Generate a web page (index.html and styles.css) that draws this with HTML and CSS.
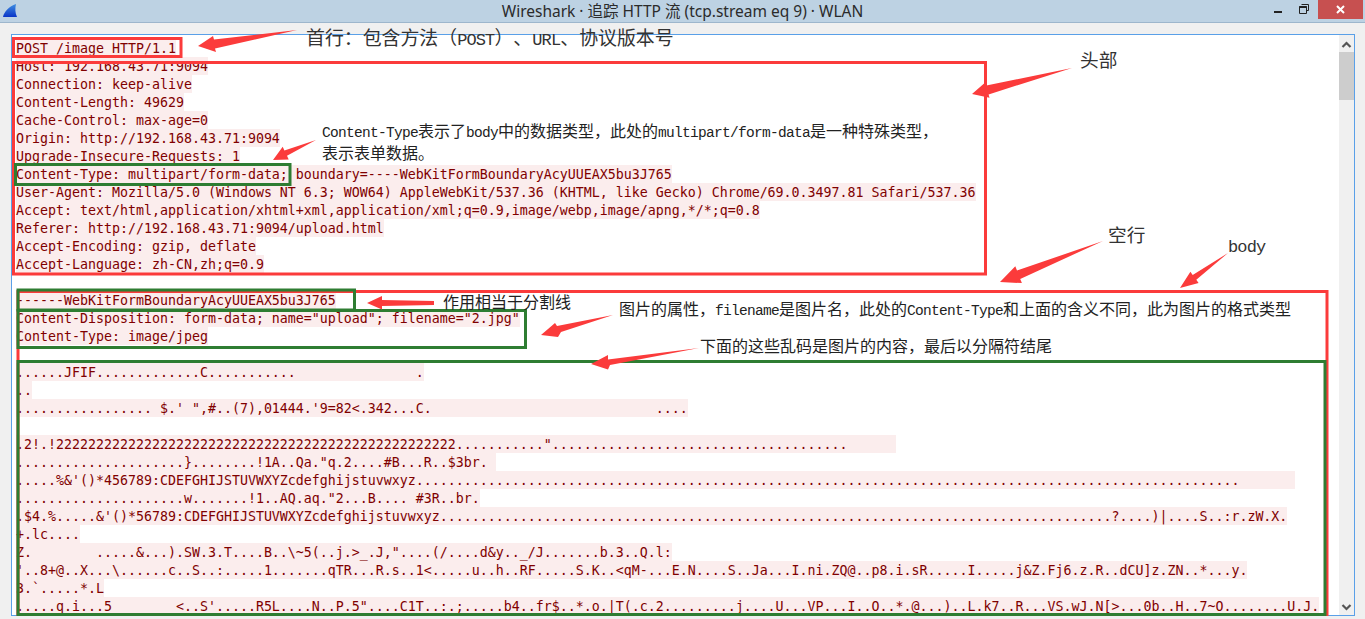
FILE: index.html
```html
<!DOCTYPE html>
<html lang="zh-CN">
<head>
<meta charset="utf-8">
<title>Wireshark · 追踪 HTTP 流 (tcp.stream eq 9) · WLAN</title>
<link rel="stylesheet" href="styles.css">
</head>
<body>
<div class="window">
  <header class="titlebar">
    <svg class="fin" width="16" height="16" viewBox="0 0 16 16"><defs><linearGradient id="fing" x1="0" y1="0" x2="0" y2="1"><stop offset="0" stop-color="#3f8ee0"/><stop offset="1" stop-color="#0a35c8"/></linearGradient></defs><path d="M1 14 C2 9 7 3 14 1 C13 5 13 10 15 14 Z" fill="url(#fing)"/></svg>
    <div class="title">Wireshark · 追踪 HTTP 流 (tcp.stream eq 9) · WLAN</div>
    <div class="controls">
      <svg class="ctl-min" width="8" height="2" viewBox="0 0 8 2"><rect width="8" height="2" fill="#222"/></svg>
      <svg class="ctl-max" width="10" height="10" viewBox="0 0 10 10"><path d="M2.500 .5H9.500V6.500H7.500M.5 2.500H7.500V9.500H.5Z" fill="none" stroke="#222"/><rect x=".5" y="2" width="7" height="2" fill="#222"/></svg>
      <div class="ctl-close"><svg width="9" height="9" viewBox="0 0 9 9"><path d="M1 1L8 8M8 1L1 8" stroke="#fff" stroke-width="2"/></svg></div>
    </div>
  </header>
  <main class="content">
    <div class="frame">
      <div class="stream">
<div class="ln"><span class="hl">POST /image HTTP/1.1</span></div>
<div class="ln"><span class="hl">Host: 192.168.43.71:9094</span></div>
<div class="ln"><span class="hl">Connection: keep-alive</span></div>
<div class="ln"><span class="hl">Content-Length: 49629</span></div>
<div class="ln"><span class="hl">Cache-Control: max-age=0</span></div>
<div class="ln"><span class="hl">Origin: http://192.168.43.71:9094</span></div>
<div class="ln"><span class="hl">Upgrade-Insecure-Requests: 1</span></div>
<div class="ln"><span class="hl">Content-Type: multipart/form-data; boundary=----WebKitFormBoundaryAcyUUEAX5bu3J765</span></div>
<div class="ln"><span class="hl">User-Agent: Mozilla/5.0 (Windows NT 6.3; WOW64) AppleWebKit/537.36 (KHTML, like Gecko) Chrome/69.0.3497.81 Safari/537.36</span></div>
<div class="ln"><span class="hl">Accept: text/html,application/xhtml+xml,application/xml;q=0.9,image/webp,image/apng,*/*;q=0.8</span></div>
<div class="ln"><span class="hl">Referer: http://192.168.43.71:9094/upload.html</span></div>
<div class="ln"><span class="hl">Accept-Encoding: gzip, deflate</span></div>
<div class="ln"><span class="hl">Accept-Language: zh-CN,zh;q=0.9</span></div>
<div class="ln"></div>
<div class="ln"><span class="hl">------WebKitFormBoundaryAcyUUEAX5bu3J765</span></div>
<div class="ln"><span class="hl">Content-Disposition: form-data; name="upload"; filename="2.jpg"</span></div>
<div class="ln"><span class="hl">Content-Type: image/jpeg</span></div>
<div class="ln"></div>
<div class="ln"><span class="hl">......JFIF.............C...........               .</span></div>
<div class="ln"><span class="hl">..</span></div>
<div class="ln"><span class="hl">................. $.' ",#..(7),01444.'9=82&lt;.342...C.                            ....</span></div>
<div class="ln"></div>
<div class="ln"><span class="hl">.2!.!22222222222222222222222222222222222222222222222222...........".....................................      </span></div>
<div class="ln"><span class="hl">.....................}........!1A..Qa."q.2....#B...R..$3br. </span></div>
<div class="ln"><span class="hl">.....%&amp;'()*456789:CDEFGHIJSTUVWXYZcdefghijstuvwxyz.......................................................................................................       </span></div>
<div class="ln"><span class="hl">.....................w.......!1..AQ.aq."2...B.... #3R..br.</span></div>
<div class="ln"><span class="hl">.$4.%.....&amp;'()*56789:CDEFGHIJSTUVWXYZcdefghijstuvwxyz....................................................................................?....)|....S..:r.zW.X.</span></div>
<div class="ln"><span class="hl">+.lc....</span></div>
<div class="ln"><span class="hl">Z.        .....&amp;...).SW.3.T....B..\~5(..j.&gt;_.J,"....(/....d&amp;y.._/J.......b.3..Q.l:</span></div>
<div class="ln"><span class="hl">'..8+@..X...\......c..S..:.....1.......qTR...R.s..1&lt;.....u..h..RF.....S.K..&lt;qM-...E.N....S..Ja...I.ni.ZQ@..p8.i.sR.....I.....j&amp;Z.Fj6.z.R..dCU]z.ZN..*...y.</span></div>
<div class="ln"><span class="hl">3.`.....*.L</span></div>
<div class="ln"><span class="hl">.....q.i...5        &lt;..S'.....R5L....N..P.5"....C1T..:.;.....b4..fr$..*.o.|T(.c.2.........j....U...VP...I..O..*.@...)..L.k7..R...VS.wJ.N[&gt;...0b..H..7~O........U.J.</span></div>
      </div>
      <div class="scrollbar">
        <svg class="chev" width="11" height="7" viewBox="0 0 11 7"><path d="M1.500 6L5.500 2L9.500 6" fill="none" stroke="#555" stroke-width="2.200"/></svg>
        <div class="thumb"></div>
        <div class="track"></div>
        <svg class="chev" width="11" height="7" viewBox="0 0 11 7"><path d="M1.500 1L5.500 5L9.500 1" fill="none" stroke="#555" stroke-width="2.200"/></svg>
      </div>
    </div>
  </main>
  <svg class="marks" width="1365" height="619" viewBox="0 0 1365 619">
    <g class="red-box">
      <rect x="13.500" y="38.500" width="167.500" height="18"/>
      <rect x="13.500" y="62.500" width="972" height="211.500"/>
      <rect x="18" y="291.500" width="1309" height="323"/>
    </g>
    <g class="green-box">
      <rect x="15.500" y="164.500" width="274.500" height="20"/>
      <rect x="18" y="290" width="336.500" height="20"/>
      <rect x="18" y="310.500" width="507.500" height="37"/>
      <rect x="18" y="361.500" width="1307" height="253"/>
    </g>
    <g class="arrows">
      <polygon points="297,30 215,48.500 216,52 198,46 213,36 214,39.500"/>
      <polygon points="1072,68 988.600,94.400 989.500,97.700 972,94 985.500,82.300 986.400,85.600"/>
      <polygon points="316,140 287,155.800 288.700,159.400 273,160 282.700,146.800 284.400,150.400"/>
      <polygon points="1103,241 1020.200,278.900 1021.900,283.100 1000,282 1015.300,266.300 1017,270.500"/>
      <polygon points="1228,253 1196.300,279.800 1198.600,283 1180,288 1190.400,271.700 1192.700,275"/>
      <polygon points="434,301 434,305 382,306 382,309.500 367,303 382,296 382,300"/>
      <polygon points="613,315 561,332 558,337 541,335 555,323 557,326"/>
      <polygon points="699,348 610,365 608,369.500 591,364 608,355 608,359.500"/>
    </g>
  </svg>
  <div class="note n-first big">首行：包含方法（<span class="lat-big">POST</span>）、<span class="lat-big">URL</span>、协议版本号</div>
  <div class="note n-head big">头部</div>
  <div class="note n-blank big">空行</div>
  <div class="note n-body big"><span class="lat-big">body</span></div>
  <div class="note n-type"><span class="lat">Content-Type</span>表示了<span class="lat">body</span>中的数据类型，此处的<span class="lat">multipart/form-data</span>是一种特殊类型，<br>表示表单数据。</div>
  <div class="note n-split">作用相当于分割线</div>
  <div class="note n-attr">图片的属性，<span class="lat">filename</span>是图片名，此处的<span class="lat">Content-Type</span>和上面的含义不同，此为图片的格式类型</div>
  <div class="note n-data">下面的这些乱码是图片的内容，最后以分隔符结尾</div>
</div>
</body>
</html>
```
FILE: styles.css
```css
* { box-sizing: border-box; }
html, body { margin: 0; padding: 0; overflow: hidden; }
.window {
  position: relative;
  width: 1365px;
  height: 619px;
  display: flex;
  flex-direction: column;
  background: #f0f0f0;
}
.titlebar {
  position: relative;
  flex: none;
  height: 23px;
  display: flex;
  align-items: center;
  justify-content: center;
  background: #bdd2e3;
  border-bottom: 1px solid #9db6cc;
}
.fin { position: absolute; left: 2px; top: 3px; }
.title {
  font: 15.500px/22px "Noto Sans", "Noto Sans CJK SC", sans-serif;
  color: #2b2b2b;
  white-space: nowrap;
}
.controls {
  position: absolute;
  right: 2px;
  top: 0;
  display: flex;
  align-items: flex-start;
}
.ctl-min { margin: 11px 17px 0 0; }
.ctl-max { margin: 4px 9px 0 0; }
.ctl-close {
  width: 45px;
  height: 19px;
  background: #c75050;
  display: flex;
  align-items: center;
  justify-content: center;
}
.content {
  flex: 1;
  min-height: 0;
  padding: 11px 10px 3px 11px;
}
.frame {
  height: 100%;
  display: flex;
  background: #fff;
  border: 1px solid #5aa0e8;
}
.stream {
  flex: 1;
  min-width: 0;
  padding: 4px 0 0 4px;
  overflow: hidden;
  font: 13.29px/20px "DejaVu Sans Mono", monospace;
  color: #800000;
}
.ln { height: 18px; white-space: pre; }
.hl { display: inline-block; height: 18px; background: #fbeded; vertical-align: top; }
.scrollbar {
  flex: none;
  width: 15px;
  display: flex;
  flex-direction: column;
  align-items: center;
  background: #f0f0f0;
}
.chev { flex: none; margin: 6px 0 4px; }
.thumb { flex: none; width: 100%; height: 48px; background: #cdcdcd; }
.track { flex: 1; }
.marks { position: absolute; left: 0; top: 0; pointer-events: none; }
.red-box rect { fill: none; stroke: #fb3b3b; stroke-width: 3; }
.green-box rect { fill: none; stroke: #2e7d32; stroke-width: 3; }
.arrows polygon { fill: #fb3b3b; }
.note {
  position: absolute;
  font: 16px/19px "Noto Sans CJK SC", sans-serif;
  color: #222;
  white-space: nowrap;
  text-spacing-trim: space-all;
}
.big { font-size: 18.67px; line-height: 22px; color: #333; }
.lat { font: 14.500px/19px "Liberation Mono", monospace; letter-spacing: -.7px; }
.lat-big { font: 17px/22px "Liberation Mono", monospace; letter-spacing: -.87px; }
.n-first { left: 306px; top: 26px; font-size: 18.9px; }
.n-head { left: 1080px; top: 48px; }
.n-blank { left: 1108px; top: 223px; }
.n-body { left: 1228px; top: 233px; }
.n-type { left: 322px; top: 121px; }
.n-split { left: 443px; top: 292px; }
.n-attr { left: 619px; top: 299px; }
.n-data { left: 700px; top: 336px; }
```
